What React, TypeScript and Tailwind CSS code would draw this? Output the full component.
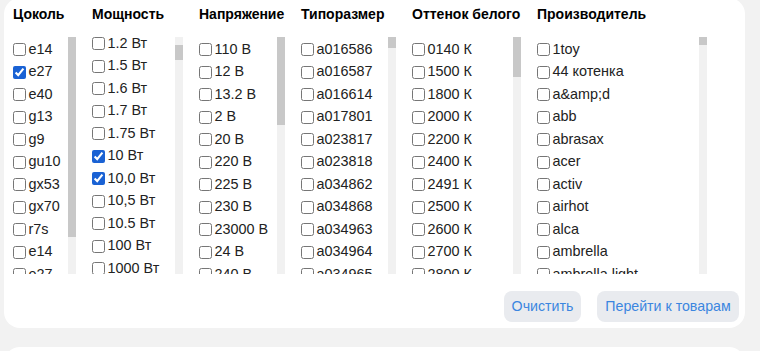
import React from "react";

type Col = {
  title: string;
  width: string;
  items: string[];
  checked?: number[];
  shift?: string;
  thumb: string;
};

const cols: Col[] = [
  {
    title: "Цоколь",
    width: "w-[63px]",
    items: ["e14", "e27", "e40", "g13", "g9", "gu10", "gx53", "gx70", "r7s", "e14", "e27", "e40"],
    checked: [1],
    thumb: "mt-0 h-[200px]",
  },
  {
    title: "Мощность",
    width: "w-[91px]",
    items: ["1.2 Вт", "1.5 Вт", "1.6 Вт", "1.7 Вт", "1.75 Вт", "10 Вт", "10,0 Вт", "10,5 Вт", "10.5 Вт", "100 Вт", "1000 Вт", "11 Вт"],
    checked: [5, 6],
    shift: "-mt-[6px]",
    thumb: "mt-[8px] h-[15px]",
  },
  {
    title: "Напряжение",
    width: "w-[86px]",
    items: ["110 В", "12 В", "13.2 В", "2 В", "20 В", "220 В", "225 В", "230 В", "23000 В", "24 В", "240 В", "250 В"],
    thumb: "mt-0 h-[88px]",
  },
  {
    title: "Типоразмер",
    width: "w-[95px]",
    items: ["a016586", "a016587", "a016614", "a017801", "a023817", "a023818", "a034862", "a034868", "a034963", "a034964", "a034965", "a034966"],
    thumb: "mt-0 h-[11px]",
  },
  {
    title: "Оттенок белого",
    width: "w-[109px]",
    items: ["0140 К", "1500 К", "1800 К", "2000 К", "2200 К", "2400 К", "2491 К", "2500 К", "2600 К", "2700 К", "2800 К", "2900 К"],
    thumb: "mt-0 h-[40px]",
  },
  {
    title: "Производитель",
    width: "w-[170px]",
    items: ["1toy", "44 котенка", "a&amp;d", "abb", "abrasax", "acer", "activ", "airhot", "alca", "ambrella", "ambrella light", "apeyron"],
    thumb: "mt-0 h-[8px]",
  },
];

function Column({ col }: { col: Col }) {
  return (
    <div className={`flex flex-col ${col.width}`}>
      <div className="text-[14px] leading-[20px] font-bold text-black whitespace-nowrap mb-[13.5px]">
        {col.title}
      </div>
      <div className="flex h-[237px]">
        <div className="flex-1 overflow-hidden">
          <div className={`pt-[1.5px] ${col.shift ?? ""}`}>
            {col.items.map((it, i) => (
              <label
                key={i}
                className="flex items-center h-[22.5px] text-[14.4px] text-[#222] whitespace-nowrap"
              >
                <input
                  type="checkbox"
                  defaultChecked={col.checked?.includes(i) ?? false}
                  className="m-0 mr-[2.5px] w-[13px] h-[13px] shrink-0 accent-[#1a62d4]"
                />
                <span>{it}</span>
              </label>
            ))}
          </div>
        </div>
        <div className="w-2 h-full bg-[#f1f1f1] flex flex-col">
          <div className={`w-full bg-[#c8c8c8] ${col.thumb}`} />
        </div>
      </div>
    </div>
  );
}

export default function App() {
  return (
    <div className="w-[760px] h-[351px] overflow-hidden bg-[#f2f2f2] pl-[4px] font-['Liberation_Sans',Arial,sans-serif]">
      <div className="-mt-[2px] w-[741px] rounded-[16px] bg-white pl-[9px] pt-[5.5px] pb-[6px]">
        <div className="flex gap-4">
          {cols.map((c) => (
            <Column key={c.title} col={c} />
          ))}
        </div>
        <div className="flex justify-end gap-4 mt-[17px] pr-[6px]">
          <button className="w-[77px] h-[31px] rounded-lg bg-[#e9ebef] text-[14.2px] text-[#3b86e0] whitespace-nowrap">
            Очистить
          </button>
          <button className="w-[142px] h-[31px] rounded-lg bg-[#e9ebef] text-[14.2px] text-[#3b86e0] whitespace-nowrap">
            Перейти к товарам
          </button>
        </div>
      </div>
      <div className="mt-[19px] w-[741px] h-[40px] rounded-[16px] bg-white" />
    </div>
  );
}
